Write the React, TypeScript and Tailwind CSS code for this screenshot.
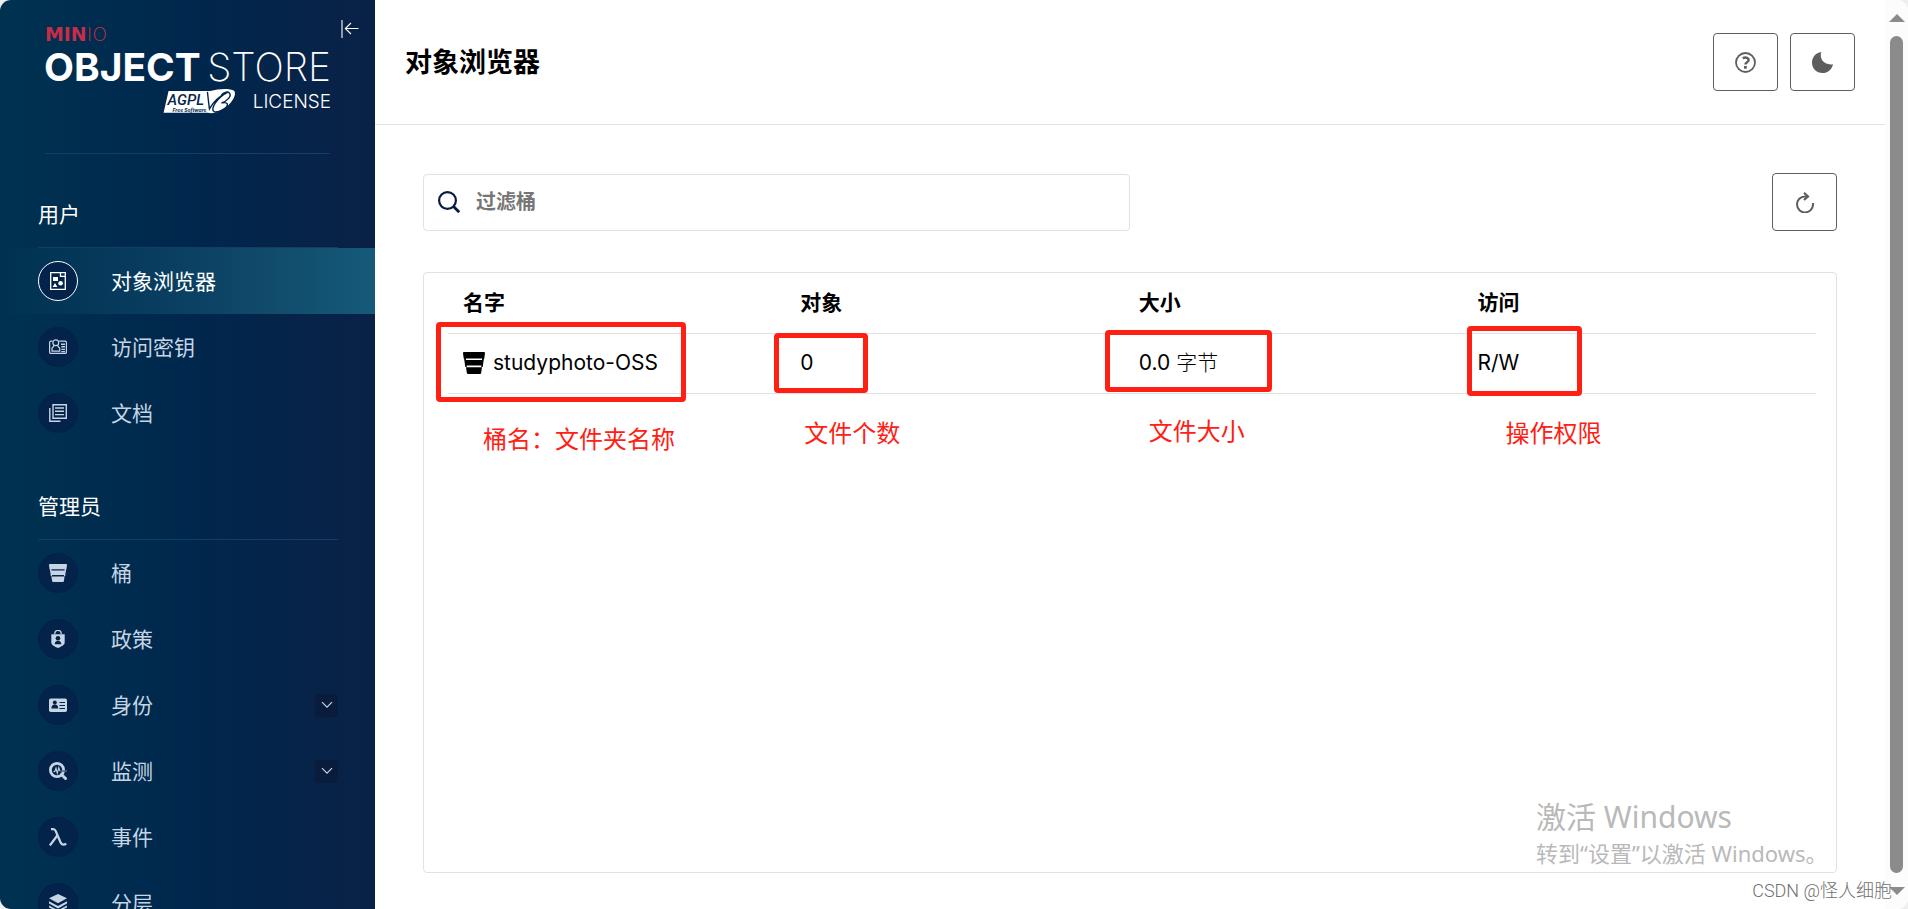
import type { ReactNode } from "react";
import clsx from "clsx";

type MenuEntry = { label: string; icon: ReactNode; active?: boolean; expandable?: boolean };

function BucketIcon({ className }: { className?: string }) {
    return (
        <svg viewBox="0 0 22 22" className={className} fill="currentColor">
            <path d="M1 0h20a1 1 0 0 1 1 1.100l-.7 5.400H.700L0 1.100A1 1 0 0 1 1 0Z" />
            <path d="M2.200 8h17.600l-.8 5.500H3ZM3 15.200h16l-.8 5.600a1.300 1.300 0 0 1-1.300 1.200H5.100a1.300 1.300 0 0 1-1.300-1.200Z" />
            <path d="M1 6h1.800l1 9H2.300ZM21 6h-1.800l-1 9h1.500Z" />
        </svg>
    );
}

const ICON = "size-[18px]";

const userMenu: MenuEntry[] = [
    {
        label: "对象浏览器",
        active: true,
        icon: (
            <svg viewBox="0 0 18 18" className={ICON} fill="none" stroke="currentColor" strokeWidth="1.300">
                <path d="M1.700.700h14.600v16.600H1.700ZM11.500.700v3.600h4.800" />
                <path d="M4 5h5v4H4ZM6 11l2.400 4H3.600Z" fill="currentColor" stroke="none" />
                <circle cx="11.600" cy="11.300" r="2.300" fill="currentColor" stroke="none" />
            </svg>
        ),
    },
    {
        label: "访问密钥",
        icon: (
            <svg viewBox="0 0 18 18" className={ICON} fill="none" stroke="currentColor" strokeWidth="1.200">
                <path d="M3.600 3.200H1.800A1.200 1.200 0 0 0 .6 4.400v9.800a1.200 1.200 0 0 0 1.200 1.200h14.400a1.200 1.200 0 0 0 1.200-1.200V4.400a1.200 1.200 0 0 0-1.200-1.200h-6" />
                <circle cx="6.800" cy="4.700" r="2.900" />
                <path d="M5.300 7.300 3 10.300v2.800h7.700v-2.800L8.300 7.300" />
                <path d="M12 6.200h4M12.300 8.800H16M12.300 11.400H16M12.300 13.600H16" strokeWidth="1.400" />
            </svg>
        ),
    },
    {
        label: "文档",
        icon: (
            <svg viewBox="0 0 18 18" className={ICON} fill="none" stroke="currentColor" strokeWidth="1.400">
                <path d="M4 .700h13.300v13.600H4Z" />
                <path d="M.8 4v13.300h10.700" />
                <path d="M6 4h9M6 7.300h9M6 10.600h9" strokeWidth="1.400" />
            </svg>
        ),
    },
];

const adminMenu: MenuEntry[] = [
    { label: "桶", icon: <BucketIcon className={ICON} /> },
    {
        label: "政策",
        icon: (
            <svg viewBox="0 0 18 18" className={ICON}>
                <path d="M5.800 4V3.200a3.200 2.800 0 0 1 6.400 0V4" fill="none" stroke="currentColor" strokeWidth="1.300" />
                <path d="M2.300 4.200h13.400v8.300c0 2.400-3.600 4.300-6.700 5.500-3.100-1.200-6.700-3.100-6.700-5.500Z" fill="currentColor" />
                <circle cx="9" cy="8.200" r="2.300" fill="#04234a" />
                <path d="M5.700 14.200c0-2.200 1.300-3.500 3.300-3.500s3.300 1.300 3.300 3.500Z" fill="#04234a" />
            </svg>
        ),
    },
    {
        label: "身份",
        expandable: true,
        icon: (
            <svg viewBox="0 0 18 18" className={ICON}>
                <rect y="2.500" width="18" height="13.500" rx="1.800" fill="currentColor" />
                <circle cx="5.800" cy="6.500" r="2" fill="#04234a" />
                <path d="M2.400 12.500c0-2.700 1.200-4 3.400-4s3.400 1.300 3.400 4Z" fill="#04234a" />
                <path d="M10.500 6.500H16M10.500 9.500H16M10.500 12.500H16" stroke="#04234a" strokeWidth="1" />
            </svg>
        ),
    },
    {
        label: "监测",
        expandable: true,
        icon: (
            <svg viewBox="0 0 18 18" className={ICON} fill="none" stroke="currentColor">
                <circle cx="8" cy="8" r="6.600" strokeWidth="2.800" />
                <path d="m12.500 12.500 4 4" strokeWidth="3" strokeLinecap="round" />
                <path d="M4.500 9.500h1.300l1.200-3.300 1.300 5 1.500-5.500 1 3.300" strokeWidth="1.100" />
                <path d="M10.800 9H18" strokeWidth="1.500" stroke="#4c6684" />
            </svg>
        ),
    },
    {
        label: "事件",
        icon: (
            <svg viewBox="0 0 18 18" className={ICON} fill="none" stroke="currentColor" strokeWidth="2.200">
                <path d="M2 1.200h2.200c1.300 0 2 .6 2.600 2l4.700 11c.7 1.600 1.300 2.500 2.800 2.500.9 0 1.800-.2 3-.9" />
                <path d="M8.300 7.500.900 17.500" />
            </svg>
        ),
    },
    {
        label: "分层",
        icon: (
            <svg viewBox="0 0 18 18" className={ICON} fill="currentColor">
                <path d="m9 0 9 4.300-9 5-9-5Z" />
                <path d="m0 7.300 9 4.800 9-4.800v2.200l-9 4.900-9-4.900Z" />
                <path d="m0 11.500 9 4.700 9-4.700v1.900L9 18l-9-4.600Z" />
            </svg>
        ),
    },
];

function Logo() {
    return (
        <svg
            viewBox="0 0 286 100"
            className="h-[100px] w-full overflow-visible"
            role="img"
            aria-label="MinIO Object Store, AGPL v3 License"
        >
            <text x="0" y="27" fill="#c72c48" fontSize="19" fontFamily="'DejaVu Sans'" fontWeight="700">
                MIN
                <tspan fontWeight="200">IO</tspan>
            </text>
            <g fill="#fff" fontFamily="Inter" fontSize="39">
                <text x="-1" y="67" fontWeight="700">OBJECT</text>
                <text x="287" y="67" fontWeight="200" textAnchor="end">STORE</text>
            </g>
            <path d="M124 77h45v22h-50Z" fill="#fff" />
            <path d="M166 77c8-2 19-3 24 0 3 5-5 15-12 19-5 3-11 4-14 3Z" fill="#fff" />
            <text x="123" y="91" fill="#03274c" fontSize="15" fontFamily="Roboto" fontWeight="500" fontStyle="italic">AGPL</text>
            <text x="128" y="98" fill="#03274c" fontSize="5" fontFamily="Inter" fontWeight="700" fontStyle="italic">Free Software</text>
            <path
                d="M163 78q1 9 2 17 6-11 19-17c-12 6-19 18-14 20 4 1 14-4 13-8-1-2-4-1-6-1 5-1 11-7 8-10-2-2-6 0-8 2"
                fill="none"
                stroke="#03274c"
                strokeWidth="1.400"
            />
            <text x="287" y="94" fill="#fff" fontFamily="Inter" fontSize="19" fontWeight="300" textAnchor="end">LICENSE</text>
        </svg>
    );
}

function MenuSection({ title, items }: { title: string; items: MenuEntry[] }) {
    return (
        <section>
            <h2 className="mr-[37px] ml-[38px] border-b border-[#133f66] pt-[45px] pb-4 text-[21px] leading-8 text-white">{title}</h2>
            <ul>
                {items.map((item) => (
                    <li key={item.label}>
                        <a
                            href="#"
                            className={clsx(
                                "flex h-[66px] items-center pr-[37px] pl-[38px] text-[21px]",
                                item.active ? "bg-linear-to-r from-transparent to-[#155a79] text-white" : "text-[#c6d5e3]"
                            )}
                        >
                            <span
                                className={clsx(
                                    "flex size-10 items-center justify-center rounded-full border bg-[#04234a]",
                                    item.active ? "border-white" : "border-[#052048]"
                                )}
                            >
                                {item.icon}
                            </span>
                            <span className="ml-[33px] flex-1 pt-0.5">{item.label}</span>
                            {item.expandable && (
                                <span className="flex size-[23px] items-center justify-center rounded-sm bg-[#091c3c]">
                                    <svg viewBox="0 0 12 8" className="h-2 w-3" fill="none" stroke="currentColor" strokeWidth="1.200">
                                        <path d="m1 1.200 5 5 5-5" />
                                    </svg>
                                </span>
                            )}
                        </a>
                    </li>
                ))}
            </ul>
        </section>
    );
}

function Sidebar() {
    return (
        <nav className="relative w-[375px] shrink-0 overflow-hidden bg-linear-to-r from-[#003250] via-[#00274d] to-[#0a2146]">
            <button aria-label="收起菜单" className="absolute top-5 right-4 text-white">
                <svg viewBox="0 0 18 18" className={ICON} fill="none" stroke="currentColor" strokeWidth="1.100">
                    <path d="M1 0v18M17.500 8.500h-13M10 3 4.300 8.500 10 14" />
                </svg>
            </button>
            <div className="mx-[45px] border-b border-[#133f66] pt-[14px] pb-[39px]">
                <Logo />
            </div>
            <MenuSection title="用户" items={userMenu} />
            <MenuSection title="管理员" items={adminMenu} />
        </nav>
    );
}

function IconButton({ label, children }: { label: string; children: ReactNode }) {
    return (
        <button
            aria-label={label}
            className="flex h-[58px] w-[65px] items-center justify-center rounded-[4px] border border-[#5e5e5e] text-[#5e5e5e]"
        >
            {children}
        </button>
    );
}

/* red frame plus caption, laid over a table cell */
function Mark({ frame, caption, text }: { frame: string; caption: string; text: string }) {
    return (
        <>
            <span className={clsx("pointer-events-none absolute rounded-[4px] border-5 border-[#ff2013]", frame)} />
            <span className={clsx("absolute text-2xl whitespace-nowrap text-[#ff2013]", caption)}>{text}</span>
        </>
    );
}

function BucketTable() {
    return (
        <table className="w-full table-fixed text-left text-[21px]">
            <thead>
                <tr className="h-[60px] border-b border-[#e2e2e2]">
                    <th className="pl-[15px]">名字</th>
                    <th className="w-[24.75%]">对象</th>
                    <th className="w-[24.75%]">大小</th>
                    <th className="w-[24.75%]">访问</th>
                </tr>
            </thead>
            <tbody>
                <tr className="h-[60px] border-b border-[#e2e2e2]">
                    <td className="relative pl-[15px]">
                        <span className="flex items-center gap-2">
                            <BucketIcon className="size-[22px]" />
                            studyphoto-OSS
                        </span>
                        <Mark frame="-top-3 -left-3 h-20 w-[250px]" caption="top-[90px] left-[35px]" text="桶名：文件夹名称" />
                    </td>
                    <td className="relative">
                        0
                        <Mark frame="-top-px -left-[26px] h-[60px] w-[94px]" caption="top-[84px] left-1" text="文件个数" />
                    </td>
                    <td className="relative">
                        0.0 <span className="font-light">字节</span>
                        <Mark frame="-top-1 -left-[34px] h-[62px] w-[167px]" caption="top-[82px] left-[10px]" text="文件大小" />
                    </td>
                    <td className="relative">
                        R/W
                        <Mark frame="-top-2 -left-[10px] h-[70px] w-[115px]" caption="top-[84px] left-7" text="操作权限" />
                    </td>
                </tr>
            </tbody>
        </table>
    );
}

function Scrollbar() {
    return (
        <div className="flex w-[23px] shrink-0 flex-col items-center gap-[14px] bg-[#fcfcfc] py-[14px] text-[#8b8b8b]">
            <svg viewBox="0 0 16 8" className="h-2 w-4" fill="currentColor">
                <path d="m8 0 8 8H0Z" />
            </svg>
            <div className="w-[13px] flex-1 rounded-full bg-[#8b8b8b]" />
            <svg viewBox="0 0 16 8" className="h-2 w-4" fill="currentColor">
                <path d="M0 0h16L8 8Z" />
            </svg>
        </div>
    );
}

export default function App() {
    return (
        <div className="h-screen bg-[#eeeeee] font-['Inter','Noto_Sans_CJK_SC',sans-serif] text-black">
            <div className="relative flex h-full overflow-hidden rounded-[11px] bg-white">
                <Sidebar />

                <main className="flex min-w-0 flex-1 flex-col">
                    <header className="flex h-[125px] shrink-0 items-center justify-between border-b border-[#e2e2e2] px-[30px]">
                        <h1 className="pt-0.5 text-[27px] font-bold">对象浏览器</h1>
                        <div className="flex gap-3">
                            <IconButton label="帮助">
                                <svg viewBox="0 0 21 21" className="size-[21px]" fill="none" stroke="currentColor" strokeWidth="1.800">
                                    <circle cx="10.500" cy="10.500" r="9.500" />
                                    <path d="M7.700 6.200c3.500-1.700 6 0 6 1.900 0 2.100-3.300 2.100-3.300 4.400" strokeWidth="2.400" />
                                    <path d="M9 14h2.800v2.700H9Z" fill="currentColor" stroke="none" />
                                </svg>
                            </IconButton>
                            <IconButton label="深色模式">
                                <svg viewBox="0 0 21 21" className="size-[21px]" fill="currentColor">
                                    <path d="M9.300 0C7 6.500 12 13.600 21 12.200 19.800 17.600 15.500 21 10.400 21 4.500 21 0 16.500 0 10.700 0 5.200 3.600.900 9.300 0Z" />
                                </svg>
                            </IconButton>
                        </div>
                    </header>

                    <div className="flex min-h-0 flex-1 flex-col px-12 pt-12 pb-9">
                        <div className="flex items-center justify-between">
                            <label className="flex h-[57px] w-1/2 items-center rounded-[4px] border border-[#e2e2e2] pl-[14px]">
                                <svg viewBox="0 0 22 22" className="size-[22px]" fill="none" stroke="#081c42" strokeWidth="2.200">
                                    <circle cx="9.500" cy="9.500" r="8.400" />
                                    <path d="m15.500 15.500 5.700 5.700" strokeWidth="2.800" />
                                </svg>
                                <input
                                    type="text"
                                    aria-label="过滤桶"
                                    placeholder="过滤桶"
                                    className="ml-4 flex-1 text-xl font-semibold outline-none placeholder:text-[#767676]"
                                />
                            </label>
                            <IconButton label="刷新">
                                <svg viewBox="0 0 18 21" className="h-[21px] w-[18px]" fill="none" stroke="currentColor" strokeWidth="2">
                                    <path d="M11.500 4.400H9A8 8 0 1 0 17 12v-1" />
                                    <path d="m8 .800 4 3.600-4 3.600" strokeWidth="2.200" />
                                </svg>
                            </IconButton>
                        </div>

                        <div className="mt-[41px] flex-1 rounded-[4px] border border-[#e2e2e2] pr-5 pl-6">
                            <BucketTable />
                        </div>
                    </div>
                </main>

                <Scrollbar />

                <div className="pointer-events-none absolute right-[84px] bottom-10 w-72 font-['Noto_Sans','Noto_Sans_CJK_SC',sans-serif] whitespace-nowrap text-[#b9b9b9]">
                    <p className="text-3xl leading-10">激活 Windows</p>
                    <p className="text-[22px] leading-8">转到“设置”以激活 Windows。</p>
                </div>
                <p className="pointer-events-none absolute right-4 bottom-1 font-['Roboto','Noto_Sans_CJK_SC',sans-serif] text-lg font-light text-[#707070]">
                    CSDN @怪人细胞
                </p>
            </div>
        </div>
    );
}
